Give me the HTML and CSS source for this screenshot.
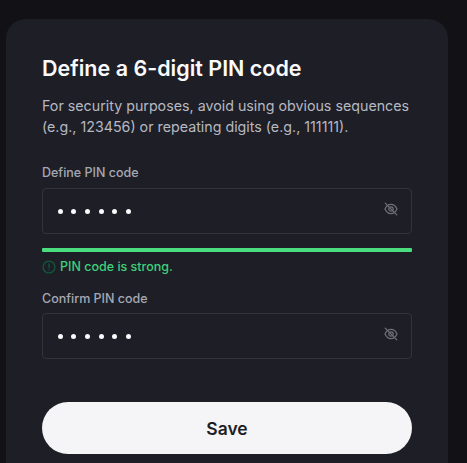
FILE: index.html
```html
<!DOCTYPE html>
<html lang="en">
<head>
    <meta charset="UTF-8">
    <meta name="viewport" content="width=device-width, initial-scale=1.0">
    <title>Define PIN code</title>
    <link rel="stylesheet" href="styles.css">
</head>
<body>
    <div class="card">
        <h1>Define a 6-digit PIN code</h1>
        <p class="intro">For security purposes, avoid using obvious sequences (e.g., 123456) or repeating digits (e.g., 111111).</p>

        <div class="field">
            <label class="field-label">Define PIN code</label>
            <div class="pin-box">
                <span class="dots"><i></i><i></i><i></i><i></i><i></i><i></i></span>
                <svg class="eye" width="16" height="16" viewBox="0 0 16 16" fill="none" stroke="#6f7077" stroke-width="1.2" stroke-linecap="round">
                    <path d="M2 8C3.2 5.2 5.4 3.4 8 3.4S12.8 5.2 14 8C12.8 10.8 10.6 12.6 8 12.6S3.2 10.8 2 8Z"/>
                    <circle cx="8" cy="8" r="2.2"/>
                    <path d="M2.2 2.2 13.8 13.8"/>
                </svg>
            </div>
        </div>

        <div class="strength-bar"></div>
        <div class="strength-msg">
            <svg width="14" height="14" viewBox="0 0 14 14" fill="none" stroke="#0f5a3c" stroke-width="1.3" stroke-linecap="round">
                <circle cx="7" cy="7" r="5.9"/>
                <path d="M7 3.8V7.6M7 9.8V10"/>
            </svg>
            <span>PIN code is strong.</span>
        </div>

        <div class="field field-confirm">
            <label class="field-label">Confirm PIN code</label>
            <div class="pin-box">
                <span class="dots"><i></i><i></i><i></i><i></i><i></i><i></i></span>
                <svg class="eye" width="16" height="16" viewBox="0 0 16 16" fill="none" stroke="#6f7077" stroke-width="1.2" stroke-linecap="round">
                    <path d="M2 8C3.2 5.2 5.4 3.4 8 3.4S12.8 5.2 14 8C12.8 10.8 10.6 12.6 8 12.6S3.2 10.8 2 8Z"/>
                    <circle cx="8" cy="8" r="2.2"/>
                    <path d="M2.2 2.2 13.8 13.8"/>
                </svg>
            </div>
        </div>

        <button class="save-btn">Save</button>
    </div>
</body>
</html>
```

FILE: styles.css
```css
* {
    margin: 0;
    padding: 0;
    box-sizing: border-box;
    font-family: Inter, 'Noto Sans', sans-serif;
}

html, body {
    height: 463px;
    overflow: hidden;
}

body {
    background: #121216;
    padding: 19px 0 0 6px;
}

.card {
    width: 442px;
    height: 460px;
    padding: 36px 36px 0;
    border-radius: 20px 20px 0 0;
    background: #1e1f26;
}

h1 {
    font-size: 21.5px;
    line-height: 26px;
    font-weight: 600;
    color: #fafafc;
}

.intro {
    margin-top: 14px;
    font-size: 14.25px;
    line-height: 21px;
    color: #b6b8c2;
}

.field {
    margin-top: 28px;
}

.field-label {
    display: block;
    margin-bottom: 7px;
    font-size: 12.5px;
    line-height: 16px;
    font-weight: 500;
    color: #a5a8b4;
}

.pin-box {
    display: flex;
    align-items: center;
    justify-content: space-between;
    height: 46px;
    padding: 0 12px 0 14.5px;
    border: 1px solid #33343b;
    border-radius: 4px;
}

.dots {
    display: flex;
    gap: 8.7px;
    margin-top: 1px;
}

.dots i {
    width: 5px;
    height: 5px;
    border-radius: 50%;
    background: #fafafc;
}

.eye {
    margin-bottom: 4px;
}

.strength-bar {
    height: 4px;
    margin-top: 14px;
    border-radius: 1px;
    background: #4ade80;
}

.strength-msg {
    display: flex;
    align-items: center;
    gap: 4px;
    margin-top: 7px;
    font-size: 12.5px;
    line-height: 16px;
    font-weight: 500;
    color: #3dd17a;
}

.field-confirm {
    margin-top: 16px;
}

.field-confirm .field-label {
    margin-bottom: 6px;
}

.save-btn {
    display: block;
    width: 100%;
    height: 52px;
    margin-top: 43px;
    border: none;
    border-radius: 26px;
    background: #f5f5f7;
    color: #1e1f26;
    font-size: 17.5px;
    font-weight: 600;
    cursor: pointer;
}
```
